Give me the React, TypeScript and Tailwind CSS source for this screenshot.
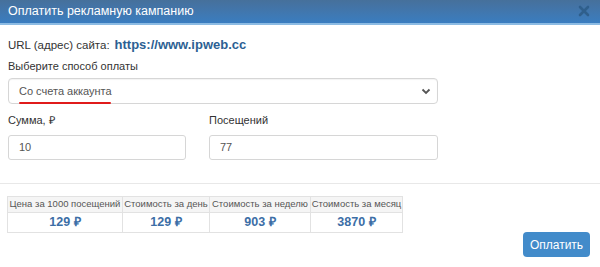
import React from "react";

export default function App() {
  const cols = [
    { h: "Цена за 1000 посещений", v: "129 ₽", w: "w-[114px]" },
    { h: "Стоимость за день", v: "129 ₽", w: "w-[87px]" },
    { h: "Стоимость за неделю", v: "903 ₽", w: "w-[101px]" },
    { h: "Стоимость за месяц", v: "3870 ₽", w: "w-[92px]" },
  ];
  return (
    <div className="w-[600px] h-[267px] bg-white overflow-hidden text-[#333]" style={{ fontFamily: '"Liberation Sans", Arial, sans-serif' }}>
      <div className="h-[25px] bg-gradient-to-b from-[#46709b] to-[#3a7dc0] border-b-2 border-[#8cbbe3] flex items-center justify-between pl-[8px] pr-[10px]">
        <span className="text-white text-[12.5px] leading-none">Оплатить рекламную кампанию</span>
        <svg width="12" height="12" viewBox="0 0 12 12" className="mt-[-2px]">
          <path d="M2 2L10 10M10 2L2 10" stroke="#2f5f8c" strokeWidth="2.6" strokeLinecap="round" />
        </svg>
      </div>
      <div className="px-[8px]">
        <div className="flex items-baseline gap-[5px] mt-[10px] h-[17px]">
          <span className="text-[11.5px]">URL (адрес) сайта:</span>
          <span className="text-[13px] font-bold text-[#2c5f93]">https://www.ipweb.cc</span>
        </div>
        <div className="text-[11px] mt-[7px] leading-[14px]">Выберите способ оплаты</div>
        <div className="relative mt-[5px] w-[430px] h-[26px] border border-[#d6d6d6] rounded-[4px] shadow-[inset_0_1px_1px_rgba(0,0,0,0.05)] flex items-center justify-between pl-[10px] pr-[6px]">
          <span className="text-[11px] text-[#555]">Со счета аккаунта</span>
          <svg width="10" height="8" viewBox="0 0 10 8">
            <path d="M1.5 2.5L5 6L8.5 2.5" stroke="#555" strokeWidth="1.8" fill="none" />
          </svg>
          <div className="absolute left-[10px] top-[23px] w-[92px] h-[2px] bg-[#e01b1b] rounded-full" />
        </div>
        <div className="flex mt-[9px]">
          <div className="w-[201px]">
            <div className="text-[11px] leading-[14px]">Сумма, ₽</div>
            <div className="mt-[8px] w-[178px] h-[25px] border border-[#d6d6d6] rounded-[3px] flex items-center pl-[10px] text-[11px] text-[#555]">10</div>
          </div>
          <div>
            <div className="text-[11px] leading-[14px]">Посещений</div>
            <div className="mt-[8px] w-[229px] h-[25px] border border-[#d6d6d6] rounded-[3px] flex items-center pl-[10px] text-[11px] text-[#555]">77</div>
          </div>
        </div>
      </div>
      <div className="mt-[23px] h-px bg-[#e8e8e8]" />
      <div className="flex justify-between items-start pl-[7px] pr-[10px] mt-[12px]">
        <div className="flex border border-[#e2e2e2]">
          {cols.map((c, i) => (
            <div key={i} className={`${c.w} ${i > 0 ? "border-l border-[#e2e2e2]" : ""}`}>
              <div className="h-[16px] bg-[#f5f5f5] text-[9.5px] text-[#555] flex items-center justify-center whitespace-nowrap border-b border-[#e2e2e2]">{c.h}</div>
              <div className="h-[19px] text-[12.5px] font-bold text-[#3c6ea6] flex items-center justify-center">{c.v}</div>
            </div>
          ))}
        </div>
        <div className="mt-[36px] w-[67px] h-[25px] bg-[#428bca] rounded-[4px] text-white text-[12px] flex items-center justify-center">Оплатить</div>
      </div>
    </div>
  );
}
